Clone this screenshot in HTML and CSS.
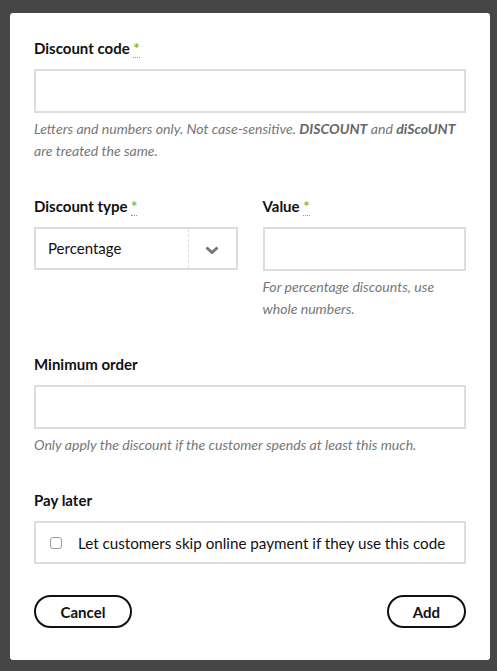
FILE: index.html
```html
<!DOCTYPE html>
<html lang="en">
<head>
<meta charset="utf-8">
<title>Add discount</title>
<link rel="stylesheet" href="styles.css">
</head>
<body>
<div class="backdrop">
  <form class="modal">
    <div class="field field-code">
      <label class="label">Discount code <abbr class="req" title="required">*</abbr></label>
      <div class="input"></div>
      <p class="help">Letters and numbers only. Not case-sensitive. <b>DISCOUNT</b> and <b>diScoUNT</b> are treated the same.</p>
    </div>

    <div class="row">
      <div class="field col">
        <label class="label">Discount type <abbr class="req" title="required">*</abbr></label>
        <div class="select">
          <span class="select-text">Percentage</span>
          <span class="select-arrow">
            <svg width="14" height="8" viewBox="0 0 14 8"><path d="M1.5 1.5 L7 6.5 L12.5 1.5" fill="none" stroke="#777" stroke-width="3"/></svg>
          </span>
        </div>
      </div>
      <div class="field col">
        <label class="label">Value <abbr class="req" title="required">*</abbr></label>
        <div class="input"></div>
        <p class="help">For percentage discounts, use whole numbers.</p>
      </div>
    </div>

    <div class="field field-min">
      <label class="label">Minimum order</label>
      <div class="input"></div>
      <p class="help">Only apply the discount if the customer spends at least this much.</p>
    </div>

    <div class="field field-pay">
      <label class="label">Pay later</label>
      <div class="checkbox-box">
        <span class="checkbox"></span>
        <span class="checkbox-text">Let customers skip online payment if they use this code</span>
      </div>
    </div>

    <div class="actions">
      <button type="button" class="btn btn-cancel">Cancel</button>
      <button type="button" class="btn btn-add">Add</button>
    </div>
  </form>
</div>
</body>
</html>
```

FILE: styles.css
```css
* { box-sizing: border-box; }
html, body { margin: 0; padding: 0; }
body {
  background: #464646;
  font-family: Lato, "Liberation Sans", sans-serif;
  color: #111;
  width: 497px;
  height: 671px;
  overflow: hidden;
}
.backdrop {
  padding: 13px 7px 0 10px;
}
.modal {
  background: #fff;
  border-radius: 3px;
  width: 480px;
  height: 647px;
  padding: 24px 24px 0 24px;
}
.field {
  margin-bottom: 32px;
}
.field-code { margin-bottom: 33px; }
.field-min { margin-bottom: 33px; }
.field-pay { margin-bottom: 31px; }
.label {
  display: block;
  font-weight: 700;
  font-size: 15px;
  line-height: 22px;
  margin-bottom: 10px;
  color: #111;
}
.req {
  color: #86b530;
  text-decoration: none;
  border-bottom: 1px dotted #86b530;
  font-weight: 700;
}
.input {
  height: 44px;
  border: 2px solid #dddddd;
  background: #fff;
}
.help {
  margin: 5px 0 0 0;
  font-style: italic;
  font-size: 14.1px;
  line-height: 22px;
  color: #777;
}
.help b { font-weight: 700; color: #666; }
.row {
  display: flex;
  gap: 25px;
}
.col { flex: 1 1 0; margin-bottom: 33px; }
.select {
  display: flex;
  height: 43px;
  border: 2px solid #dddddd;
}
.select-text {
  flex: 1;
  font-size: 15px;
  line-height: 39px;
  padding-left: 12px;
  color: #111;
}
.select-arrow {
  width: 48px;
  border-left: 1px dashed #dddddd;
  display: flex;
  align-items: center;
  justify-content: center;
  padding-top: 2px;
}
.checkbox-box {
  display: flex;
  align-items: center;
  height: 43px;
  border: 2px solid #dddddd;
  padding-left: 14px;
}
.checkbox {
  width: 12px;
  height: 12px;
  border: 1px solid #999;
  border-radius: 3px;
  margin-right: 16px;
  background: #fff;
}
.checkbox-text {
  font-size: 15.2px;
  color: #111;
}
.actions {
  display: flex;
  justify-content: space-between;
}
.btn {
  height: 33px;
  border: 2px solid #111;
  border-radius: 17px;
  background: #fff;
  font-family: inherit;
  font-weight: 700;
  font-size: 15px;
  color: #111;
  padding: 0;
}
.btn-cancel { width: 98px; }
.btn-add { width: 79px; }
```
